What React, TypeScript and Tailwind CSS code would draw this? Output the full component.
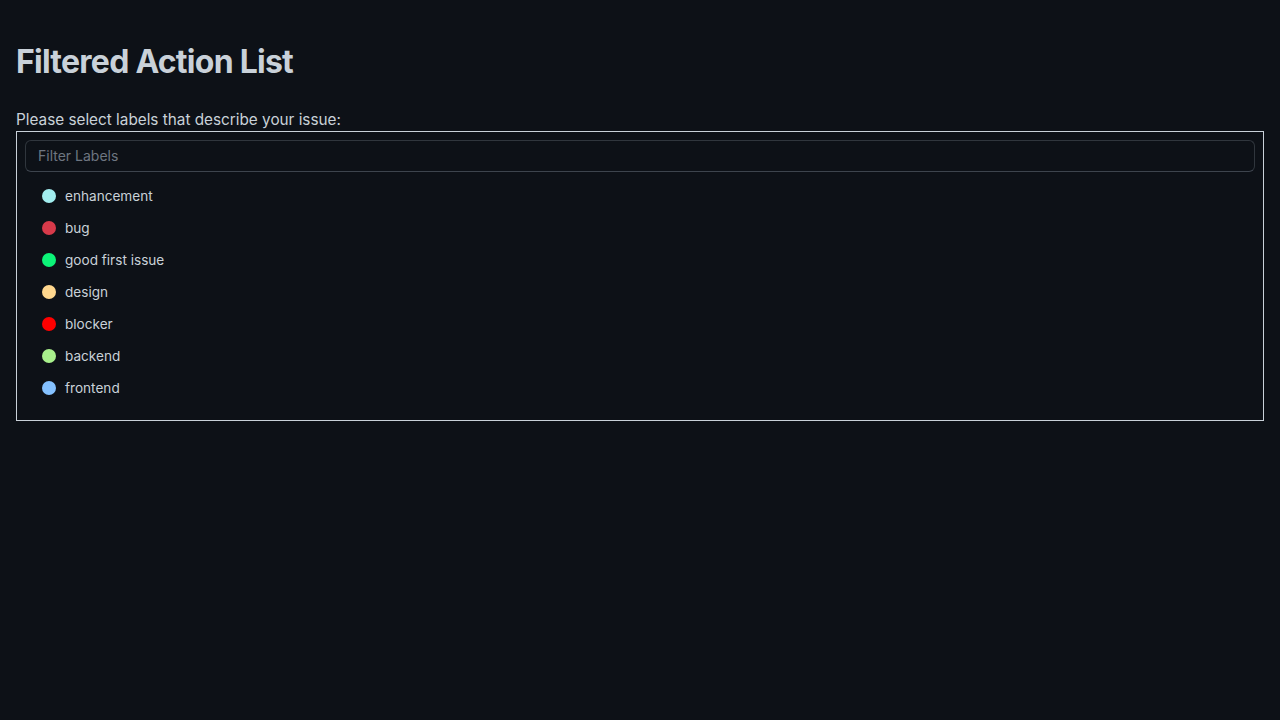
import React from "react";

const labels = [
  { name: "enhancement", color: "#a2eeef" },
  { name: "bug", color: "#d73a4a" },
  { name: "good first issue", color: "#0cf478" },
  { name: "design", color: "#ffd78e" },
  { name: "blocker", color: "#ff0000" },
  { name: "backend", color: "#a8f08c" },
  { name: "frontend", color: "#84c1ff" },
];

export default function App() {
  return (
    <div
      className="min-h-[720px] bg-[#0d1117] px-4 text-[#c9d1d9]"
      style={{ fontFamily: "Inter, 'Noto Sans', sans-serif" }}
    >
      <h1 className="pt-[42px] mb-[25px] text-[32px] font-bold leading-10 tracking-[-0.75px] text-[#c9d1d9]">
        Filtered Action List
      </h1>
      <div className="pt-px text-[15.3px] leading-[23px] text-[#c9d1d9]">
        Please select labels that describe your issue:
      </div>
      <div className="border border-[#c9d1d9] p-2">
        <div className="flex h-8 items-center rounded-md border border-[#30363d] border-b-[#3d444d] px-3 text-sm text-[#6e7681]">
          Filter Labels
        </div>
        <ul className="py-2">
          {labels.map((l) => (
            <li key={l.name} className="ml-[9px] mr-2 flex h-8 items-center gap-[9px] px-2 text-[13.6px] text-[#c9d1d9]">
              <span
                className="inline-block h-[14px] w-[14px] shrink-0 rounded-full"
                style={{ backgroundColor: l.color }}
              />
              <span>{l.name}</span>
            </li>
          ))}
        </ul>
      </div>
    </div>
  );
}
